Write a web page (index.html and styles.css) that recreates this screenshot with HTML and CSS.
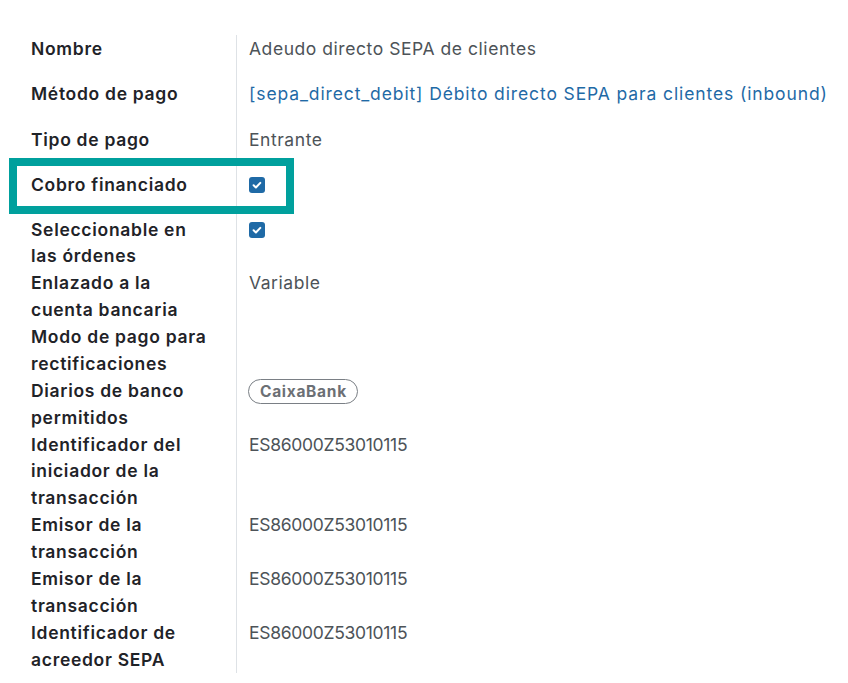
FILE: index.html
```html
<!DOCTYPE html>
<html lang="es">
<head>
<meta charset="utf-8">
<title>Método de pago</title>
<link rel="stylesheet" href="styles.css">
</head>
<body>
<div class="form">
  <div class="row short"><div class="label">Nombre</div><div class="value">Adeudo directo SEPA de clientes</div></div>
  <div class="row short"><div class="label">Método de pago</div><div class="value"><a class="link" href="#">[sepa_direct_debit] Débito directo SEPA para clientes (inbound)</a></div></div>
  <div class="row short"><div class="label">Tipo de pago</div><div class="value">Entrante</div></div>
  <div class="row short highlight"><div class="label">Cobro financiado</div><div class="value"><span class="check"><svg viewBox="0 0 16 16" width="16" height="16"><path d="M4.6 8.3l2.3 2.2 4.4-4.6" fill="none" stroke="#fff" stroke-width="2" stroke-linecap="round" stroke-linejoin="round"/></svg></span></div></div>
  <div class="row first-long"><div class="label">Seleccionable en<br>las órdenes</div><div class="value"><span class="check"><svg viewBox="0 0 16 16" width="16" height="16"><path d="M4.6 8.3l2.3 2.2 4.4-4.6" fill="none" stroke="#fff" stroke-width="2" stroke-linecap="round" stroke-linejoin="round"/></svg></span></div></div>
  <div class="row"><div class="label">Enlazado a la<br>cuenta bancaria</div><div class="value">Variable</div></div>
  <div class="row"><div class="label">Modo de pago para<br>rectificaciones</div><div class="value"></div></div>
  <div class="row"><div class="label">Diarios de banco<br>permitidos</div><div class="value"><span class="badge">CaixaBank</span></div></div>
  <div class="row"><div class="label">Identificador del<br>iniciador de la<br>transacción</div><div class="value"><span class="code">ES86000Z53010115</span></div></div>
  <div class="row"><div class="label">Emisor de la<br>transacción</div><div class="value"><span class="code">ES86000Z53010115</span></div></div>
  <div class="row"><div class="label">Emisor de la<br>transacción</div><div class="value"><span class="code">ES86000Z53010115</span></div></div>
  <div class="row"><div class="label">Identificador de<br>acreedor SEPA</div><div class="value"><span class="code">ES86000Z53010115</span></div></div>
</div>
</body>
</html>
```
FILE: styles.css
```css
html, body {
  margin: 0;
  padding: 0;
  background: #ffffff;
}
body {
  font-family: Inter, "Open Sans", sans-serif;
  font-size: 17.5px;
  letter-spacing: 0.7px;
  color: #495057;
}
.form {
  display: flex;
  flex-direction: column;
  padding-top: 26.5px;
  background-image: linear-gradient(#dee2e6, #dee2e6);
  background-repeat: no-repeat;
  background-position: 236px 35px;
  background-size: 1px 638px;
  min-height: 683px;
  box-sizing: border-box;
}
.row {
  display: grid;
  grid-template-columns: 249px 1fr;
  line-height: 26.875px;
}
.row.short {
  height: 45.5px;
  align-items: center;
}
.row.first-long {
  margin-top: 8px;
}
.label {
  padding-left: 31px;
  font-weight: 600;
  color: #1f2328;
}
.value {
  color: #4d5358;
  white-space: nowrap;
  letter-spacing: 0.55px;
}
.link {
  color: #1f6aa6;
  text-decoration: none;
  letter-spacing: 0.88px;
}
.code {
  letter-spacing: -0.3px;
}
.check {
  display: inline-flex;
  width: 16px;
  height: 16px;
  border-radius: 3px;
  background: #1f6aa6;
  vertical-align: -2px;
}
.badge {
  display: inline-block;
  border: 1px solid #7a7f85;
  border-radius: 13px;
  padding: 0 10px 0 11px;
  line-height: 23px;
  font-size: 15.5px;
  font-weight: 700;
  letter-spacing: 0.7px;
  color: #6c7075;
  margin-left: -1px;
}
.highlight {
  position: relative;
}
.highlight::after {
  content: "";
  position: absolute;
  left: 9px;
  top: -5.5px;
  width: 285px;
  height: 56px;
  border: 8px solid #00a09d;
  box-sizing: border-box;
  pointer-events: none;
}
```
